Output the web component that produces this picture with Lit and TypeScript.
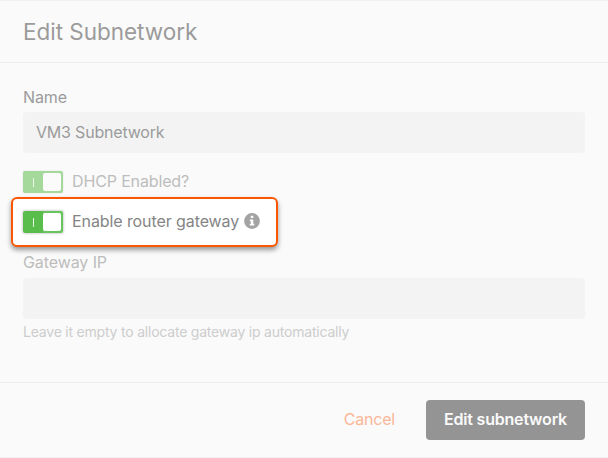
import { LitElement, html, css } from "lit";
import { customElement, property } from "lit/decorators.js";

@customElement("toggle-switch")
class ToggleSwitch extends LitElement {
  @property({ type: Boolean, reflect: true }) dimmed = false;

  static styles = css`
    :host { display: block; flex: none; width: 40px; height: 22px; border-radius: 2px; box-shadow: 0 0 2px 1px rgba(0, 0, 0, 0.17); }
    :host([dimmed]) { box-shadow: 0 0 1px 1px rgba(0, 0, 0, 0.035); }
    .track { box-sizing: border-box; width: 40px; height: 22px; padding: 2px 2px 2px 10px; border-radius: 2px; background: linear-gradient(90deg, #59bd4b 20px, #68c45c 20px); display: flex; align-items: center; justify-content: space-between; }
    .mark { width: 1px; height: 9px; background: #e4f5e1; }
    .knob { width: 18px; height: 18px; border-radius: 2px; background: #fff; }
    :host([dimmed]) .track { background: #a5d99c; }
    :host([dimmed]) .mark { background: #eff8ed; }
    :host([dimmed]) .knob { background: #fbfbfb; }
  `;

  render() {
    return html`<div class="track"><span class="mark"></span><span class="knob"></span></div>`;
  }
}

@customElement("app-root")
class AppRoot extends LitElement {
  static styles = css`
    :host { display: block; font-family: Inter, "Liberation Sans", sans-serif; font-size: 16px; letter-spacing: -0.09px; color: #9b9b9b; }
    .dialog { box-sizing: border-box; width: 608px; height: 458px; background: #fafafa; border-top: 1px solid #f1f1f1; border-bottom: 1px solid #f1f1f1; display: flex; flex-direction: column; overflow: hidden; }
    header { box-sizing: border-box; height: 62px; padding: 1px 23px 0; display: flex; align-items: center; border-bottom: 1px solid #efefef; }
    h1 { margin: 0; font-size: 22.5px; font-weight: 400; line-height: 28px; letter-spacing: -0.03px; color: #9b9b9b; }
    main { flex: 1; padding: 24px 23px 0; }
    .label { display: block; line-height: 20px; height: 20px; }
    .field { box-sizing: border-box; height: 41px; margin-top: 5px; padding: 0 13px 1px; border-radius: 4px; background: #f3f3f3; display: flex; align-items: center; letter-spacing: -0.2px; }
    .row { display: flex; align-items: center; gap: 9px; margin-top: 18px; height: 22px; color: #bdbdbd; letter-spacing: -0.14px; white-space: nowrap; }
    .highlight { box-sizing: border-box; width: 267px; height: 50px; margin: 4px 0 0 -12px; padding: 0 10px; border: 2px solid #fc5603; border-radius: 6px; background: #fff; box-shadow: 0 3px 5px rgba(0, 0, 0, 0.4); color: #858585; display: flex; align-items: center; gap: 9px; white-space: nowrap; }
    .row span, .highlight span { padding-bottom: 2px; }
    .info { width: 16px; height: 16px; flex: none; margin: -2px 0 0 -4px; }
    .dim { color: #bdbdbd; }
    .gateway { margin-top: 5px; }
    .gateway + .field { margin-top: 6px; }
    .hint { margin: 4px 0 0; font-size: 14px; line-height: 18px; letter-spacing: -0.21px; color: #cdcdcd; }
    footer { box-sizing: border-box; height: 75px; padding: 0 23px; border-top: 1px solid #efefef; display: flex; align-items: center; justify-content: flex-end; gap: 31px; }
    button { font: inherit; letter-spacing: -0.2px; border: 0; margin: 0; padding: 0 0 2px; white-space: nowrap; }
    .cancel { background: none; color: #fab698; }
    .submit { width: 159px; height: 40px; border-radius: 4px; background: #949494; color: #fafafa; font-weight: 600; }
  `;

  render() {
    return html`
      <div class="dialog">
        <header><h1>Edit Subnetwork</h1></header>
        <main>
          <span class="label">Name</span>
          <div class="field">VM3 Subnetwork</div>
          <div class="row"><toggle-switch dimmed></toggle-switch><span>DHCP Enabled?</span></div>
          <div class="highlight">
            <toggle-switch></toggle-switch><span>Enable router gateway</span>
            <svg class="info" viewBox="0 0 16 16">
              <circle cx="8" cy="8" r="7.9" fill="#a3a3a3" />
              <path fill="#fff" d="M6.7 2.8h2.6v2.3H6.7zM5.8 6.4h3.5v4.3h1v1.8H5.8v-1.8h1V8.2h-1z" />
            </svg>
          </div>
          <span class="label dim gateway">Gateway IP</span>
          <div class="field"></div>
          <p class="hint">Leave it empty to allocate gateway ip automatically</p>
        </main>
        <footer><button class="cancel">Cancel</button><button class="submit">Edit subnetwork</button></footer>
      </div>
    `;
  }
}
